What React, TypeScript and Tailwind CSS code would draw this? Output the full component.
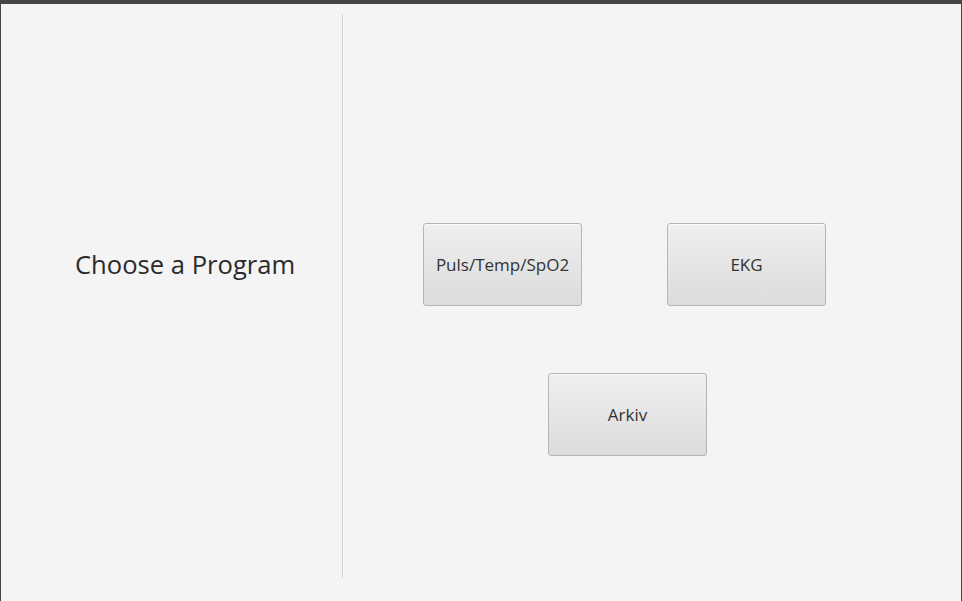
const ProgramButton = ({ label }: { label: string }) => (
    <button className="w-[159px] h-[83px] rounded-[3px] border border-[#b5b5b5] bg-gradient-to-b from-[#efefef] to-[#dcdcdc] text-[17px] leading-[24px] text-[#333] shadow-[inset_0_1px_0_#fafafa]">
        {label}
    </button>
);

export default function App() {
    return (
        <div className="w-[962px] h-[601px] bg-[#454545] pt-[4px] px-[1px] overflow-hidden" style={{ fontFamily: '"Open Sans", "Noto Sans", sans-serif' }}>
            <div className="flex h-full bg-[#f4f4f4]">
                {/* left pane */}
                <div className="w-[341px] pl-[74px] pt-[243px]">
                    <h1 className="text-[25.6px] leading-[36px] text-[#2b2b2b]">Choose a Program</h1>
                </div>

                {/* divider */}
                <div className="mt-[10px] mb-[23px] w-[2px] border-l border-[#cfcfcf] border-r border-r-[#fbfbfb]" />

                {/* buttons */}
                <div className="flex-1 flex flex-col pt-[219px] pl-[79px]">
                    <div className="flex gap-[85px]">
                        <ProgramButton label="Puls/Temp/SpO2" />
                        <ProgramButton label="EKG" />
                    </div>
                    <div className="mt-[67px] pl-[125px]">
                        <ProgramButton label="Arkiv" />
                    </div>
                </div>
            </div>
        </div>
    );
}
